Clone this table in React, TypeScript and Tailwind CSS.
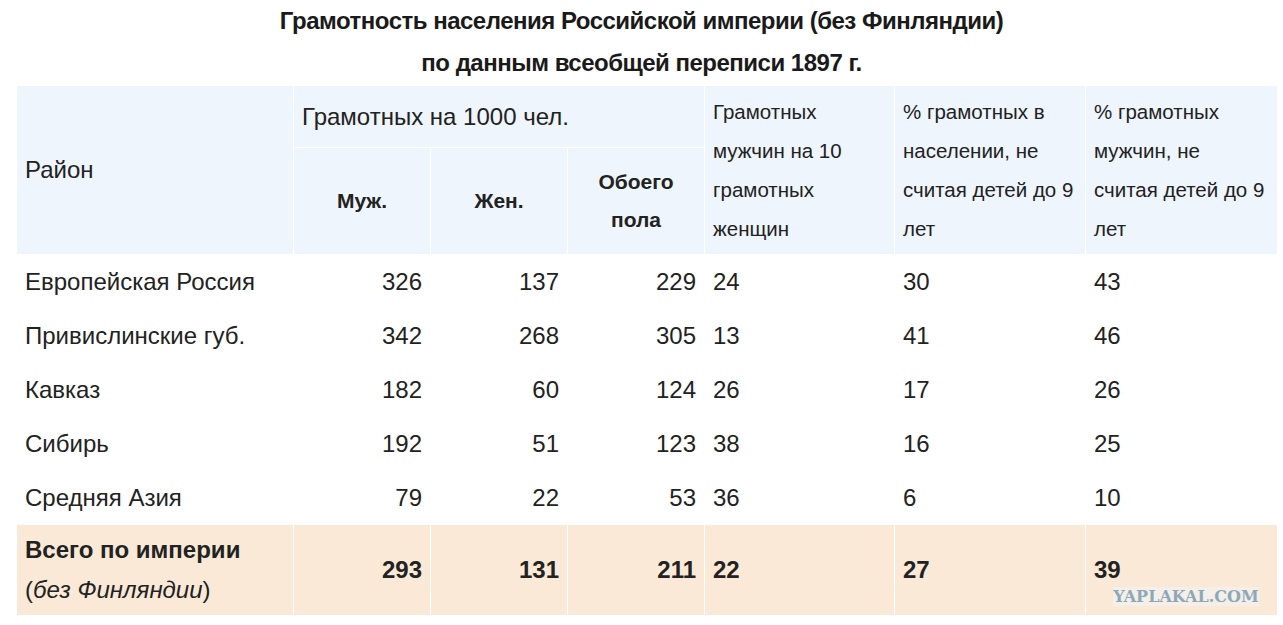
import React from 'react'

type Row = { name: string; m: number; f: number; both: number; ratio: number; pct: number; pctM: number }

const rows: Row[] = [
  { name: 'Европейская Россия', m: 326, f: 137, both: 229, ratio: 24, pct: 30, pctM: 43 },
  { name: 'Привислинские губ.', m: 342, f: 268, both: 305, ratio: 13, pct: 41, pctM: 46 },
  { name: 'Кавказ', m: 182, f: 60, both: 124, ratio: 26, pct: 17, pctM: 26 },
  { name: 'Сибирь', m: 192, f: 51, both: 123, ratio: 38, pct: 16, pctM: 25 },
  { name: 'Средняя Азия', m: 79, f: 22, both: 53, ratio: 36, pct: 6, pctM: 10 },
]

// header lines are broken the same way as in the source table
const sideHeads: string[][] = [
  ['Грамотных', 'мужчин на 10', 'грамотных', 'женщин'],
  ['% грамотных в', 'населении, не', 'считая детей до 9', 'лет'],
  ['% грамотных', 'мужчин, не', 'считая детей до 9', 'лет'],
]

export default function App() {
  const cell = 'border border-white px-2 align-middle'
  const sideHead = 'border border-white pl-2 pr-0 align-middle text-left font-normal text-[20.5px] leading-[39px] whitespace-nowrap'
  const subHead = `${cell} text-center font-bold text-[21px] leading-[38px]`
  return (
    <div className="relative w-[1283px] h-[625px] overflow-hidden bg-white text-[#222] font-['Liberation_Sans',Arial,sans-serif]">
      <div className="h-[85px] text-center font-bold text-[24px] tracking-[-0.5px] leading-[42px] text-[#1a1a1a]">
        <div>Грамотность населения Российской империи (без Финляндии)</div>
        <div>по данным всеобщей переписи 1897 г.</div>
      </div>

      <table className="ml-[16px] w-[1261px] table-fixed border-collapse text-[24px]">
        <colgroup>
          <col className="w-[277px]" />
          <col className="w-[137px]" />
          <col className="w-[137px]" />
          <col className="w-[137px]" />
          <col className="w-[190px]" />
          <col className="w-[191px]" />
          <col className="w-[192px]" />
        </colgroup>
        <thead className="bg-[#eef5fc]">
          <tr className="h-[62px]">
            <th rowSpan={2} className={`${cell} text-left font-normal`}>Район</th>
            <th colSpan={3} className={`${cell} text-left font-normal`}>Грамотных на 1000 чел.</th>
            {sideHeads.map((lines, i) => (
              <th key={i} rowSpan={2} className={sideHead}>
                {lines.map((l) => (
                  <div key={l}>{l}</div>
                ))}
              </th>
            ))}
          </tr>
          <tr className="h-[107px]">
            <th className={subHead}>Муж.</th>
            <th className={subHead}>Жен.</th>
            <th className={subHead}>Обоего пола</th>
          </tr>
        </thead>
        <tbody>
          {rows.map((r) => (
            <tr key={r.name} className="h-[54px]">
              <td className={cell}>{r.name}</td>
              <td className={`${cell} text-right`}>{r.m}</td>
              <td className={`${cell} text-right`}>{r.f}</td>
              <td className={`${cell} text-right`}>{r.both}</td>
              <td className={cell}>{r.ratio}</td>
              <td className={cell}>{r.pct}</td>
              <td className={cell}>{r.pctM}</td>
            </tr>
          ))}
          <tr className="h-[91px] bg-[#fae9d6] font-bold leading-[40px]">
            <td className={cell}>
              <div>Всего по империи</div>
              <div className="font-normal">
                (<span className="italic">без Финляндии</span>)
              </div>
            </td>
            <td className={`${cell} text-right`}>293</td>
            <td className={`${cell} text-right`}>131</td>
            <td className={`${cell} text-right`}>211</td>
            <td className={cell}>22</td>
            <td className={cell}>27</td>
            <td className={cell}>39</td>
          </tr>
        </tbody>
      </table>

      <div className="absolute left-[1113px] top-[587px] w-[146px] h-[19px] bg-[#f4efe8] flex items-center justify-center text-[#8ea8b8] text-[16px] font-bold font-['DejaVu_Serif',serif] leading-none">
        YAPLAKAL.COM
      </div>
    </div>
  )
}
